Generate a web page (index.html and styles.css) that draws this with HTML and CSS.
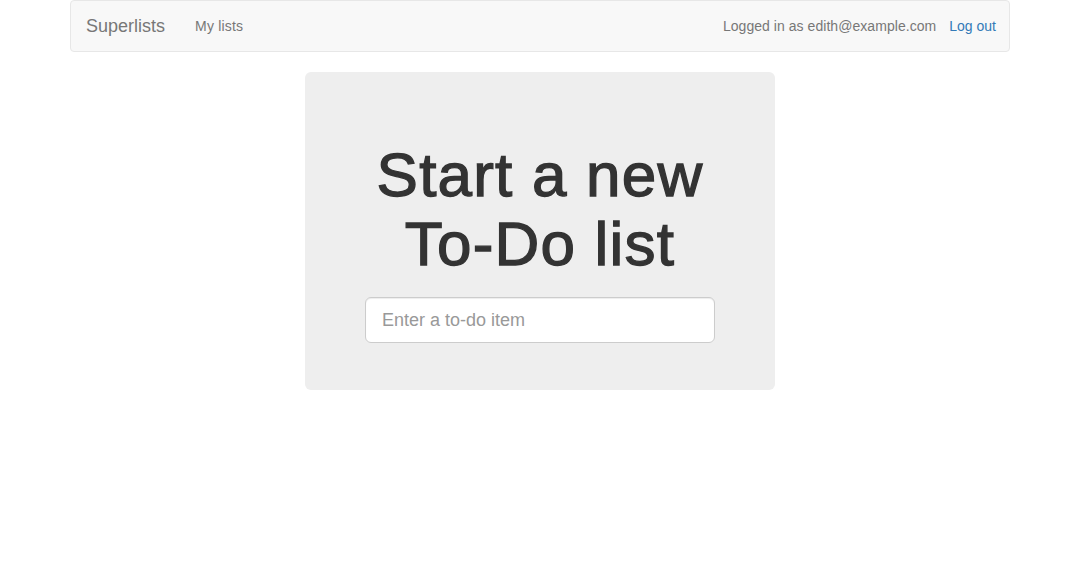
FILE: index.html
```html
<!DOCTYPE html>
<html>
<head>
<meta charset="utf-8">
<link rel="stylesheet" href="styles.css">
</head>
<body>
<div class="container">
  <nav class="navbar">
    <div class="nav-left">
      <a class="brand" href="#">Superlists</a>
      <a class="nav-link" href="#">My lists</a>
    </div>
    <div class="nav-right">
      <span class="nav-text">Logged in as edith@example.com</span>
      <a class="logout" href="#">Log out</a>
    </div>
  </nav>
  <div class="jumbotron">
    <h1 class="title">Start a new To-Do list</h1>
    <form class="form">
      <input class="input" type="text" placeholder="Enter a to-do item">
    </form>
  </div>
</div>
</body>
</html>
```
FILE: styles.css
```css
* { box-sizing: border-box; }
html, body { margin: 0; padding: 0; background: #fff; }
body {
  font-family: "Liberation Sans", Arial, sans-serif;
  font-size: 14px;
  line-height: 20px;
  color: #333;
}
a { text-decoration: none; }
.container {
  width: 940px;
  margin: 0 auto;
}
.navbar {
  height: 52px;
  background: #f8f8f8;
  border: 1px solid #e7e7e7;
  border-radius: 4px;
  display: flex;
  justify-content: space-between;
  align-items: stretch;
  margin-bottom: 20px;
}
.nav-left, .nav-right {
  display: flex;
  align-items: center;
}
.brand {
  font-size: 18px;
  line-height: 20px;
  padding: 15px;
  color: #777;
}
.nav-link {
  color: #777;
  padding: 15px;
  letter-spacing: 0.2px;
}
.nav-right { padding-right: 13px; }
.nav-text { color: #777; letter-spacing: 0.05px; }
.logout {
  color: #337ab7;
  margin-left: 13px;
}
.jumbotron {
  width: 470px;
  margin: 0 auto;
  background: #eee;
  border-radius: 6px;
  padding: 48px 40px 47px;
  text-align: center;
}
.title {
  font-size: 62px;
  line-height: 69px;
  font-weight: 400;
  margin: 20px 0 19px;
  color: #333;
  letter-spacing: 1.2px;
  -webkit-text-stroke: 1.3px #333;
}
.form { margin: 0; }
.input {
  display: block;
  width: 350px;
  height: 46px;
  margin: 0 auto;
  padding: 10px 16px;
  font-family: "Liberation Sans", Arial, sans-serif;
  font-size: 18px;
  border: 1px solid #ccc;
  border-radius: 6px;
  background: #fff;
  color: #555;
  box-shadow: inset 0 1px 1px rgba(0,0,0,.075);
}
.input::placeholder { color: #999; }
```
